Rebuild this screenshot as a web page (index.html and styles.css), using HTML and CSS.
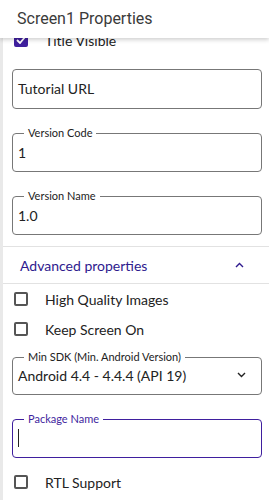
FILE: index.html
```html
<!DOCTYPE html>
<html lang="en">
<head>
    <meta charset="UTF-8">
    <meta name="viewport" content="width=device-width, initial-scale=1.0">
    <title>Screen1 Properties</title>
    <link rel="stylesheet" href="styles.css">
</head>
<body>
    <div class="panel">
        <div class="panel-header">Screen1 Properties</div>

        <div class="panel-body">
            <div class="check-row title-row">
                <span class="box checked">
                    <svg width="10" height="8" viewBox="0 0 10 8"><path d="M1 4l3 3 5-6" fill="none" stroke="#fff" stroke-width="1.8"/></svg>
                </span>
                <span>Title Visible</span>
            </div>

            <div class="plain-field">Tutorial URL</div>

            <fieldset class="field">
                <legend>Version Code</legend>
                <div class="value">1</div>
            </fieldset>

            <fieldset class="field">
                <legend>Version Name</legend>
                <div class="value">1.0</div>
            </fieldset>

            <div class="section-gap"></div>

            <div class="section-head">
                <span>Advanced properties</span>
                <svg width="9" height="6" viewBox="0 0 9 6"><path d="M1 5l3.5-3.5L8 5" fill="none" stroke="#2e1a8e" stroke-width="1.4"/></svg>
            </div>

            <div class="check-row">
                <span class="box"></span>
                <span>High Quality Images</span>
            </div>
            <div class="check-row">
                <span class="box"></span>
                <span>Keep Screen On</span>
            </div>

            <fieldset class="field sdk">
                <legend>Min SDK (Min. Android Version)</legend>
                <div class="value select-value">
                    <span>Android 4.4 - 4.4.4 (API 19)</span>
                    <svg width="9" height="6" viewBox="0 0 9 6"><path d="M1 1l3.5 3.5L8 1" fill="none" stroke="#222" stroke-width="1.4"/></svg>
                </div>
            </fieldset>

            <fieldset class="field focused">
                <legend>Package Name</legend>
                <div class="value"><span class="cursor"></span></div>
            </fieldset>

            <div class="check-row rtl-row">
                <span class="box"></span>
                <span>RTL Support</span>
            </div>
        </div>
    </div>
</body>
</html>
```

FILE: styles.css
```css
html, body {
    margin: 0;
    padding: 0;
}

body {
    background-color: #e9e9e9;
    font-family: Lato, 'Noto Sans', sans-serif;
    color: #222;
    height: 500px;
    overflow: hidden;
}

.panel {
    margin-left: 3px;
    background-color: #fff;
    height: 500px;
}

.panel-header {
    position: relative;
    z-index: 1;
    height: 38px;
    margin-left: -3px;
    padding-left: 17px;
    line-height: 38px;
    font-family: Roboto, sans-serif;
    font-size: 16px;
    color: #3a3a3a;
    background-color: #fff;
    box-shadow: 0 2px 4px rgba(0, 0, 0, 0.18);
}

.panel-body {
    margin-top: -13px;
}

.check-row {
    display: flex;
    align-items: center;
    height: 30px;
    padding-left: 11px;
    font-size: 14px;
}

.box {
    display: flex;
    align-items: center;
    justify-content: center;
    box-sizing: border-box;
    width: 14px;
    height: 14px;
    margin-right: 17px;
    border: 2px solid #555;
    border-radius: 2px;
}

.box.checked {
    background-color: #3f1f9e;
    border-color: #3f1f9e;
}

.plain-field {
    box-sizing: border-box;
    height: 40px;
    margin: 14px 7px 0 9px;
    padding-left: 5px;
    line-height: 38px;
    font-size: 14px;
    border: 1px solid #777;
    border-radius: 4px;
}

.field {
    margin: 18px 7px 0 9px;
    padding: 0 5px 6px;
    border: 1px solid #777;
    border-radius: 4px;
    min-width: 0;
}

.field legend {
    padding: 0 4px;
    margin-left: 6px;
    font-size: 11px;
    line-height: 12px;
    color: #222;
}

.value {
    height: 26px;
    display: flex;
    align-items: center;
    font-size: 14px;
}

.select-value {
    justify-content: space-between;
    padding-right: 10px;
}

.sdk {
    margin-top: 7px;
    padding-bottom: 7px;
}

.sdk .value {
    height: 24px;
}

.focused {
    margin-top: 18px;
    border-color: #3f1f9e;
}

.focused legend {
    color: #3f1f9e;
}

.cursor {
    display: block;
    width: 1px;
    height: 18px;
    background-color: #222;
}

.section-gap {
    height: 11px;
    border-bottom: 1px solid #e2e2e2;
}

.section-head {
    display: flex;
    align-items: center;
    justify-content: space-between;
    height: 36px;
    padding: 0 25px 0 17px;
    font-size: 14px;
    color: #2e1a8e;
    border-bottom: 1px solid #e2e2e2;
}

.rtl-row {
    margin-top: 9px;
}
```
